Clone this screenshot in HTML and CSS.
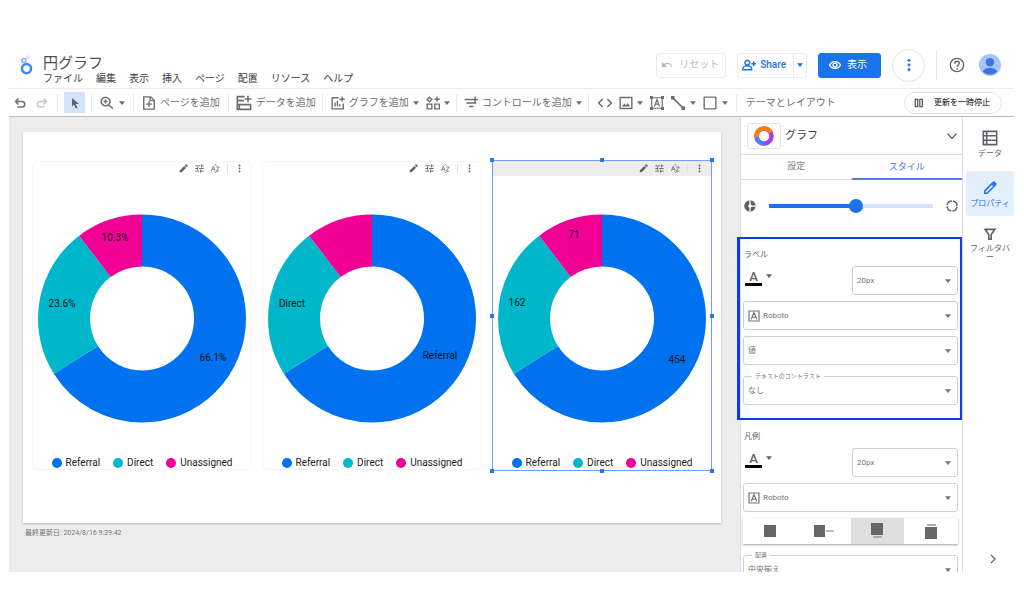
FILE: index.html
```html
<!DOCTYPE html>
<html lang="ja">
<head>
<meta charset="utf-8">
<title>円グラフ</title>
<link rel="stylesheet" href="styles.css">
</head>
<body>
<svg class="defs" aria-hidden="true">
  <symbol id="caret" viewBox="0 0 8 5"><path d="M0 0h8L4 5z"/></symbol>
  <symbol id="pencil" viewBox="0 0 24 24"><path d="M2 22v-5L14 5l5 5L7 22zM15.500 3.500l2-2a2 2 0 0 1 3 0l2 2a2 2 0 0 1 0 3l-2 2z"/></symbol>
  <symbol id="tune" viewBox="0 0 24 24"><path d="M1 5h12M17 5h6M17 1v8M1 12h6M11 12h12M7 8v8M1 19h10M15 19h8M15 15v8" fill="none" stroke="currentColor" stroke-width="2.500"/></symbol>
  <symbol id="sort" viewBox="0 0 24 24"><path d="M1 18L6 6l5 12M3 14h6M14 8h8l-8 11h8M9 4l3-3 3 3M9 20l3 3 3-3" fill="none" stroke="currentColor" stroke-width="2"/></symbol>
  <symbol id="dots" viewBox="0 0 24 24"><circle cx="12" cy="4" r="2.500"/><circle cx="12" cy="12" r="2.500"/><circle cx="12" cy="20" r="2.500"/></symbol>
  <symbol id="undo" viewBox="0 0 24 24"><path d="M9 3L3 9l6 6M3 9h13a5.500 5.500 0 0 1 0 11H7" fill="none" stroke="currentColor" stroke-width="3"/></symbol>
  <symbol id="boxa" viewBox="0 0 24 24"><path d="M2 2h20v20H2zM6.500 18.500L12 5l5.500 13.500M8.500 14.500h7" fill="none" stroke="currentColor" stroke-width="2.400"/></symbol>
</svg>

<header class="header">
  <svg class="logo" viewBox="0 0 14 22"><circle cx="7" cy="15" r="5" fill="none" stroke="#4285f4" stroke-width="2.800"/><circle cx="4" cy="6" r="2.300" fill="none" stroke="#7fabf8" stroke-width="1.600"/><circle cx="8.500" cy="2.500" r="1.500" fill="none" stroke="#bcd4fc"/></svg>
  <div class="heading">
    <h1 class="title">円グラフ</h1>
    <nav class="menu">
      <button>ファイル</button><button>編集</button><button>表示</button><button>挿入</button><button>ページ</button><button>配置</button><button>リソース</button><button>ヘルプ</button>
    </nav>
  </div>
  <div class="actions">
    <button class="btn reset" disabled><svg class="i12" viewBox="0 0 24 24"><path d="M2 6v10h10l-4-4c5-4 10-2 13 4l2-1C19 7 12 5 6 10z"/></svg>リセット</button>
    <div class="share">
      <button class="share-main"><svg class="i14" viewBox="0 0 24 24"><path d="M9 4a4 4 0 1 0 .1 0M1.500 20v-2c0-6 15-6 15 0v2zM20 6v8M16 10h8" fill="none" stroke="currentColor" stroke-width="2.500"/></svg>Share</button>
      <button class="share-more" aria-label="共有メニュー"><svg class="caret"><use href="#caret"/></svg></button>
    </div>
    <button class="btn view"><svg class="i12" viewBox="0 0 24 24"><path d="M1 12c5-9 17-9 22 0-5 9-17 9-22 0z" fill="none" stroke="currentColor" stroke-width="2.500"/><circle cx="12" cy="12" r="4" fill="none" stroke="currentColor" stroke-width="2.500"/></svg>表示</button>
    <button class="more" aria-label="その他"><svg class="i14"><use href="#dots"/></svg></button>
    <span class="rule"></span>
    <button class="plain help" aria-label="ヘルプ"><svg class="i16" viewBox="0 0 24 24"><circle cx="12" cy="12" r="10" fill="none" stroke="currentColor" stroke-width="2"/><path d="M8.500 10c0-5 7-4.500 7-.5 0 2.500-3.500 2.500-3.500 5.500" fill="none" stroke="currentColor" stroke-width="2"/><circle cx="12" cy="18" r="1.300"/></svg></button>
    <svg class="avatar" viewBox="0 0 24 24"><circle cx="12" cy="12" r="12" fill="#a4c5fb"/><circle cx="12" cy="9" r="4.600" fill="#3c73e0"/><path d="M4 19c2-5 14-5 16 0-4 4.500-12 4.500-16 0z" fill="#3c73e0"/></svg>
  </div>
</header>

<div class="toolbar">
  <div class="group history">
    <button class="tool" aria-label="元に戻す"><svg class="i12"><use href="#undo"/></svg></button>
    <button class="tool redo" aria-label="やり直し"><svg class="i12"><use href="#undo"/></svg></button>
  </div>
  <div class="group pick">
    <button class="tool active" aria-label="選択"><svg class="i12" viewBox="0 0 24 24"><path d="M6 2l14 12h-7l4 7-3.500 2L10 15l-4 4z"/></svg></button>
  </div>
  <div class="group roomy">
    <button class="tool zoom" aria-label="ズーム"><svg class="i14" viewBox="0 0 24 24"><path d="M9.500 2a7.500 7.500 0 1 0 .1 0M15 15l7 7M6 9.500h7M9.500 6v7" fill="none" stroke="currentColor" stroke-width="2.600"/></svg><svg class="caret"><use href="#caret"/></svg></button>
  </div>
  <div class="group roomy">
    <button class="tool"><svg class="i14" viewBox="0 0 24 24"><path d="M3 1.500h12l6 6v15H3zM12 9v10M7 14h10M14 2v6h6" fill="none" stroke="currentColor" stroke-width="2.400"/></svg>ページを追加</button>
  </div>
  <div class="group">
    <button class="tool"><svg class="i16" viewBox="0 0 24 24"><path d="M13 2.500H2v19h20v-7H2M2 8.500h10M5 14v7M18 1v10M13 6h10" fill="none" stroke="currentColor" stroke-width="2.400"/></svg>データを追加</button>
  </div>
  <div class="group charts">
    <button class="tool"><svg class="i14" viewBox="0 0 24 24"><path d="M13 3H2v19h19v-9M7 18v-7M11 18V8M15 18v-4M19 1v9M14.500 5.500h9" fill="none" stroke="currentColor" stroke-width="2.400"/></svg>グラフを追加<svg class="caret"><use href="#caret"/></svg></button>
    <button class="tool" aria-label="コミュニティ ビジュアリゼーション"><svg class="i14" viewBox="0 0 24 24"><path d="M2 14h8v8H2zM15 14h8v8h-8zM6 2l4 4-4 4-4-4zM19 1v9M14.500 5.500h9" fill="none" stroke="currentColor" stroke-width="2.400"/></svg><svg class="caret"><use href="#caret"/></svg></button>
  </div>
  <div class="group">
    <button class="tool"><svg class="i14" viewBox="0 0 24 24"><path d="M1 6h15M4 12h17M9 18h7M19 1v10M14 6h10" fill="none" stroke="currentColor" stroke-width="2.400"/></svg>コントロールを追加<svg class="caret"><use href="#caret"/></svg></button>
  </div>
  <div class="group insert">
    <button class="tool" aria-label="URL の埋め込み"><svg class="i14" viewBox="0 0 24 24"><path d="M8 5l-7 7 7 7M16 5l7 7-7 7" fill="none" stroke="currentColor" stroke-width="2.600"/></svg></button>
    <button class="tool image" aria-label="画像"><svg class="i14" viewBox="0 0 24 24"><path d="M2 2.500h20v19H2z" fill="none" stroke="currentColor" stroke-width="2.400"/><path d="M5 18l4-5 3 3 3-4 4 6z"/></svg><svg class="caret"><use href="#caret"/></svg></button>
    <button class="tool" aria-label="テキスト"><svg class="i14" viewBox="0 0 24 24"><path d="M3 3h18v18H3zM7.500 18L12 6l4.500 12M9 14h6" fill="none" stroke="currentColor" stroke-width="2"/><path d="M0 0h5v5H0zM19 0h5v5h-5zM0 19h5v5H0zM19 19h5v5h-5z"/></svg></button>
    <button class="tool line" aria-label="線"><svg class="i14" viewBox="0 0 24 24"><path d="M3 3l18 18" stroke="currentColor" stroke-width="3"/><path d="M0 0h6v6H0zM18 18h6v6h-6z"/></svg><svg class="caret"><use href="#caret"/></svg></button>
    <button class="tool shape" aria-label="図形"><svg class="i14" viewBox="0 0 24 24"><rect x="2" y="2" width="20" height="20" rx="1" fill="none" stroke="currentColor" stroke-width="2.400"/></svg><svg class="caret"><use href="#caret"/></svg></button>
  </div>
  <div class="group last">
    <button class="tool">テーマとレイアウト</button>
  </div>
  <button class="pause"><svg class="i10" viewBox="0 0 24 24"><path d="M3 3h6v18H3zM14 3h6v18h-6z" fill="none" stroke="currentColor" stroke-width="2.600"/></svg>更新を一時停止</button>
</div>

<div class="workspace">
  <main class="canvas">
    <div class="page">
      <article class="card">
        <div class="card-tools"><svg><use href="#pencil"/></svg><svg><use href="#tune"/></svg><svg><use href="#sort"/></svg><span></span><svg><use href="#dots"/></svg></div>
        <svg class="donut" viewBox="0 0 220 209">
          <g class="ring"><circle class="referral" cx="110" cy="104.500" r="78" pathLength="687" stroke-dasharray="454 687"/><circle class="direct" cx="110" cy="104.500" r="78" pathLength="687" stroke-dasharray="162 687" stroke-dashoffset="-454"/><circle class="unassigned" cx="110" cy="104.500" r="78" pathLength="687" stroke-dasharray="71 687" stroke-dashoffset="-616"/></g>
          <text x="83" y="27">10.3%</text><text x="30" y="93">23.6%</text><text x="181" y="147">66.1%</text>
        </svg>
        <ul class="legend"><li><i class="dot blue"></i>Referral</li><li><i class="dot teal"></i>Direct</li><li><i class="dot pink"></i>Unassigned</li></ul>
      </article>
      <article class="card">
        <div class="card-tools"><svg><use href="#pencil"/></svg><svg><use href="#tune"/></svg><svg><use href="#sort"/></svg><span></span><svg><use href="#dots"/></svg></div>
        <svg class="donut" viewBox="0 0 220 209">
          <g class="ring"><circle class="referral" cx="110" cy="104.500" r="78" pathLength="687" stroke-dasharray="454 687"/><circle class="direct" cx="110" cy="104.500" r="78" pathLength="687" stroke-dasharray="162 687" stroke-dashoffset="-454"/><circle class="unassigned" cx="110" cy="104.500" r="78" pathLength="687" stroke-dasharray="71 687" stroke-dashoffset="-616"/></g>
          <text x="30" y="93">Direct</text><text x="178" y="145">Referral</text>
        </svg>
        <ul class="legend"><li><i class="dot blue"></i>Referral</li><li><i class="dot teal"></i>Direct</li><li><i class="dot pink"></i>Unassigned</li></ul>
      </article>
      <article class="card selected">
        <div class="card-tools"><svg><use href="#pencil"/></svg><svg><use href="#tune"/></svg><svg><use href="#sort"/></svg><span></span><svg><use href="#dots"/></svg></div>
        <svg class="donut" viewBox="0 0 220 209">
          <g class="ring"><circle class="referral" cx="110" cy="104.500" r="78" pathLength="687" stroke-dasharray="454 687"/><circle class="direct" cx="110" cy="104.500" r="78" pathLength="687" stroke-dasharray="162 687" stroke-dashoffset="-454"/><circle class="unassigned" cx="110" cy="104.500" r="78" pathLength="687" stroke-dasharray="71 687" stroke-dashoffset="-616"/></g>
          <text x="82" y="24">71</text><text x="25" y="92">162</text><text x="185" y="149">454</text>
        </svg>
        <ul class="legend"><li><i class="dot blue"></i>Referral</li><li><i class="dot teal"></i>Direct</li><li><i class="dot pink"></i>Unassigned</li></ul>
        <div class="handles"><b></b><b></b><b></b><b></b><b class="empty"></b><b></b><b></b><b></b><b></b></div>
      </article>
    </div>
    <p class="updated">最終更新日: 2024/8/16 9:39:42</p>
  </main>

  <aside class="panel">
    <div class="panel-head">
      <span class="chart-type"><svg viewBox="0 0 24 24"><g fill="none" stroke-width="5.500"><circle cx="12" cy="12" r="9" stroke="#a142f4"/><circle cx="12" cy="12" r="9" pathLength="100" stroke="#4285f4" stroke-dasharray="22 100" stroke-dashoffset="-25"/><circle cx="12" cy="12" r="9" pathLength="100" stroke="#fa7b17" stroke-dasharray="46 100" stroke-dashoffset="-47"/></g></svg></span>
      <h2>グラフ</h2>
      <button class="plain" aria-label="グラフの種類を選択"><svg class="i10" viewBox="0 0 24 24"><path d="M1 6l11 12L23 6" fill="none" stroke="currentColor" stroke-width="3"/></svg></button>
    </div>
    <div class="tabs" role="tablist">
      <button role="tab" aria-selected="false">設定</button>
      <button role="tab" aria-selected="true">スタイル</button>
    </div>
    <div class="hole">
      <svg class="i12" viewBox="0 0 24 24"><circle cx="12" cy="12" r="7.500" fill="none" stroke="currentColor" stroke-width="8"/><path d="M12 0v24M12 12h12" stroke="#fff" stroke-width="2.500"/></svg>
      <input type="range" min="0" max="100" value="53" aria-label="ドーナツの穴の大きさ">
      <svg class="i12" viewBox="0 0 24 24"><circle cx="12" cy="12" r="10" fill="none" stroke="currentColor" stroke-width="3" pathLength="100" stroke-dasharray="21 4" stroke-dashoffset="-2"/></svg>
    </div>
    <section class="style-group marked">
      <h3>ラベル</h3>
      <div class="type-row">
        <button class="font-color" aria-label="ラベルの文字色"><span>A</span><svg class="caret"><use href="#caret"/></svg></button>
        <div class="field"><select aria-label="ラベルの文字サイズ"><option>20px</option></select><svg class="caret"><use href="#caret"/></svg></div>
      </div>
      <div class="field"><svg class="i12"><use href="#boxa"/></svg><select aria-label="ラベルのフォント"><option>Roboto</option></select><svg class="caret"><use href="#caret"/></svg></div>
      <div class="field"><select aria-label="ラベルの内容"><option>値</option></select><svg class="caret"><use href="#caret"/></svg></div>
      <div class="field titled"><label for="contrast">テキストのコントラスト</label><select id="contrast"><option>なし</option></select><svg class="caret"><use href="#caret"/></svg></div>
    </section>
    <section class="style-group">
      <h3>凡例</h3>
      <div class="type-row">
        <button class="font-color" aria-label="凡例の文字色"><span>A</span><svg class="caret"><use href="#caret"/></svg></button>
        <div class="field"><select aria-label="凡例の文字サイズ"><option>20px</option></select><svg class="caret"><use href="#caret"/></svg></div>
      </div>
      <div class="field"><svg class="i12"><use href="#boxa"/></svg><select aria-label="凡例のフォント"><option>Roboto</option></select><svg class="caret"><use href="#caret"/></svg></div>
      <div class="segments">
        <button aria-label="なし"><svg viewBox="0 0 20 16"><path d="M4 2h12v12H4z"/></svg></button>
        <button aria-label="右"><svg viewBox="0 0 20 16"><path d="M0 2h11v12H0z"/><path d="M12 7h8v2h-8z" fill="#bbb"/></svg></button>
        <button class="on" aria-label="下"><svg viewBox="0 0 20 16"><path d="M4 0h12v12H4z"/><path d="M6 13h9v2H6z" fill="#aaa"/></svg></button>
        <button aria-label="上"><svg viewBox="0 0 20 16"><path d="M4 4h12v12H4z"/><path d="M6 1h9v2H6z" fill="#aaa"/></svg></button>
      </div>
      <div class="field titled"><label for="align">配置</label><select id="align"><option>中央揃え</option></select><svg class="caret"><use href="#caret"/></svg></div>
    </section>
  </aside>

  <nav class="rail">
    <button><svg class="i16" viewBox="0 0 24 24"><path d="M2 2h20v20H2zM2 8.700h20M2 15.300h20M7 2v20" fill="none" stroke="currentColor" stroke-width="2.400"/></svg>データ</button>
    <button class="current"><svg class="i14" viewBox="0 0 24 24"><path d="M3 21v-4L15 5l4 4L7 21zM17 3l2-1 3 3-1 2z" fill="none" stroke="currentColor" stroke-width="2.600"/></svg>プロパティ</button>
    <button class="filter"><svg class="i14" viewBox="0 0 24 24"><path d="M3.500 4h17L14 13v8h-4v-8z" fill="none" stroke="currentColor" stroke-width="2.800"/></svg>フィルタバー</button>
    <button class="collapse" aria-label="パネルを閉じる"><svg class="i10" viewBox="0 0 24 24"><path d="M7 2l10 10L7 22" fill="none" stroke="currentColor" stroke-width="3"/></svg></button>
  </nav>
</div>
</body>
</html>
```
FILE: styles.css
```css
* { box-sizing: border-box; }

body {
  display: flex;
  flex-direction: column;
  height: 100vh;
  margin: 0;
  padding: 42px 10px 42px 9px;
  background: #fff;
  color: #5f6368;
  font: 10px/14px Roboto, "Noto Sans CJK JP", sans-serif;
}

h1, h2, h3, p, ul { margin: 0; padding: 0; font-weight: 400; }

button, select {
  padding: 0;
  border: 0;
  background: none;
  color: inherit;
  font: inherit;
}

svg { display: block; flex: none; fill: currentColor; }
.defs { position: absolute; width: 0; height: 0; }
.i10 { width: 10px; height: 10px; }
.i12 { width: 12px; height: 12px; }
.i14 { width: 14px; height: 14px; }
.i16 { width: 16px; height: 16px; }
.caret { width: 6px; height: 4px; }

/* Header */
.header {
  display: flex;
  flex: none;
  align-items: center;
  height: 47px;
  padding: 0 13px 0 11px;
  border-bottom: 1px solid #ececec;
}
.logo { width: 13px; height: 20px; margin-right: 10px; }
.heading { padding-top: 9px; }
.title { color: #4a4d51; font-size: 15px; line-height: 18px; }
.menu { display: flex; gap: 13px; color: #3c4043; }
.actions { display: flex; align-items: center; margin-left: auto; gap: 11px; }
.btn, .share {
  display: flex;
  align-items: center;
  height: 25px;
  border: 1px solid #ececec;
  border-radius: 3px;
}
.btn { gap: 6px; padding: 0 6px 0 4px; }
.reset { color: #b4b6b8; }
.share { color: #1a73e8; font-weight: 500; }
.share-main { display: flex; align-items: center; gap: 4px; padding: 0 7px 0 4px; }
.share-more { align-self: stretch; padding: 0 3px; border-left: 1px solid #ececec; }
.view { padding: 0 13px 0 10px; border-color: #1a73e8; background: #1a73e8; color: #fff; }
.more {
  display: grid;
  place-items: center;
  width: 33px;
  height: 33px;
  border: 1px solid #e4e4e4;
  border-radius: 50%;
  color: #1a73e8;
}
.rule { width: 1px; height: 30px; background: #e8e8e8; }
.help { margin: 0 3px 0 1px; }
.avatar { width: 22px; height: 22px; }

/* Toolbar */
.toolbar {
  display: flex;
  flex: none;
  align-items: center;
  height: 28px;
  padding-right: 12px;
  border-bottom: 1px solid #bdbdbd;
}
.group {
  display: flex;
  align-items: center;
  gap: 7px;
  height: 18px;
  padding: 0 6px 0 7px;
  border-right: 1px solid #ececec;
}
.roomy { padding: 0 8px; }
.tool { display: flex; align-items: center; gap: 4px; color: #6b6f73; white-space: nowrap; }
.history { gap: 10px; padding: 0 9px 0 5px; }
.redo { color: #c4c6c8; transform: scaleX(-1); }
.pick { padding: 0 6px; }
.active { justify-content: center; width: 21px; height: 21px; background: #d2e3fc; color: #5f6368; }
.zoom { gap: 5px; }
.charts { padding-left: 8px; }
.insert { gap: 7px; padding: 0 8px 0 9px; }
.line .caret, .shape .caret { margin-left: 1px; }
.last { border: 0; padding-left: 9px; }
.pause {
  display: flex;
  align-items: center;
  height: 22px;
  margin-left: auto;
  padding: 0 11px 0 9px;
  gap: 10px;
  border: 1px solid #e6e6e6;
  border-radius: 11px;
  color: #3c4043;
  font-size: 8px;
  font-weight: 500;
  white-space: nowrap;
}

/* Workspace */
.workspace {
  display: grid;
  flex: 1;
  grid-template-columns: minmax(0, 1fr) 223px 51px;
  grid-template-rows: minmax(0, 1fr);
  min-height: 0;
  overflow: hidden;
}
.canvas { padding: 15px 19px 0 14px; background: #ededed; }
.page {
  display: grid;
  grid-template-columns: repeat(3, minmax(0, 1fr));
  gap: 10px;
  padding: 29px 9px 53px;
  background: #fff;
  box-shadow: 0 1px 2px #b8b8b8;
}
.updated { padding: 3px 2px; color: #757575; font-size: 7px; }

.card {
  position: relative;
  display: flex;
  flex-direction: column;
  border-radius: 6px;
  box-shadow: inset 0 0 0 1px #f6f6f6;
}
.card-tools {
  display: flex;
  align-items: center;
  justify-content: flex-end;
  gap: 7px;
  height: 15px;
  padding-right: 8px;
  color: #5f6368;
}
.card-tools svg { width: 9px; height: 9px; }
.card-tools span { width: 1px; height: 9px; background: #e0e0e0; }
.donut { width: 100%; margin: 38px 0 32px; }
.donut text { fill: #111; font-size: 10px; text-anchor: middle; }
.ring { fill: none; stroke-width: 52px; transform: rotate(-90deg); transform-origin: 110px 104.5px; }
.referral { stroke: #0072f0; }
.direct { stroke: #00b6cb; }
.unassigned { stroke: #f10096; }
.legend {
  display: flex;
  justify-content: center;
  gap: 13px;
  height: 15px;
  color: #212121;
  list-style: none;
}
.legend li { display: flex; align-items: center; gap: 4px; }
.dot { width: 10px; height: 10px; border-radius: 50%; }
.blue { background: #0072f0; }
.teal { background: #00b6cb; }
.pink { background: #f10096; }

.selected { border-radius: 0; box-shadow: none; }
.selected .card-tools { background: #ededed; }
.selected::after {
  content: "";
  position: absolute;
  inset: -1px 0;
  border: 1px solid #6ba0f6;
}
.handles {
  position: absolute;
  z-index: 1;
  inset: -3px -2px;
  display: grid;
  grid-template-columns: repeat(3, 4px);
  align-content: space-between;
  justify-content: space-between;
}
.handles b { width: 4px; height: 4px; background: #2a75ea; }
.handles .empty { visibility: hidden; }

/* Properties panel */
.panel { position: relative; border: solid #dcdcdc; border-width: 0 1px; background: #fff; }
.panel-head {
  display: flex;
  align-items: center;
  height: 38px;
  padding: 0 5px 0 6px;
  gap: 4px;
  border-bottom: 1px solid #dcdcdc;
}
.panel-head h2 { flex: 1; color: #3c4043; font-size: 11px; }
.chart-type {
  display: grid;
  place-items: center;
  width: 34px;
  height: 26px;
  border: 1px solid #e8e8e8;
  border-radius: 2px;
}
.chart-type svg { width: 20px; height: 20px; }
.tabs { display: grid; grid-template-columns: 1fr 1fr; height: 25px; border-bottom: 1px solid #dcdcdc; }
.tabs button { padding-bottom: 2px; color: #80868b; font-size: 9px; }
.tabs [aria-selected="true"] { margin-bottom: -1px; padding-bottom: 0; border-bottom: 2px solid #4f7fe0; color: #3f74e0; }
.hole { display: flex; align-items: center; justify-content: space-between; height: 57px; padding: 0 4px 6px 3px; }
.hole input {
  flex: 1;
  height: 14px;
  margin: 0 13px;
  appearance: none;
  background: linear-gradient(90deg, #1a73e8 53%, #d2e3fc 53%) center / 100% 4px no-repeat;
}
.hole input::-webkit-slider-thumb { width: 14px; height: 14px; appearance: none; border-radius: 50%; background: #1a73e8; }

.style-group { display: grid; gap: 6px; padding: 11px 4px 0 2px; }
.marked { margin: 0 0 0 -4px; padding: 10px 2px 13px 3px; border: 3px solid #0b3bf2; border-width: 2px 2px 2px 3px; }
.style-group h3 { padding-left: 1px; margin-bottom: -1px; font-size: 8px; line-height: 12px; }
.type-row { display: flex; justify-content: space-between; align-items: flex-start; }
.type-row .field { width: 106px; }
.font-color { display: flex; gap: 4px; padding: 4px 0 0 2px; }
.font-color span { width: 17px; border-bottom: 3px solid #000; font-size: 13px; font-weight: 500; line-height: 13px; }
.font-color .caret { margin-top: 4px; }
.field {
  position: relative;
  display: flex;
  align-items: center;
  height: 29px;
  padding: 0 6px 0 4px;
  border: 1px solid #cfcfcf;
  border-radius: 3px;
  color: #757575;
  font-size: 8px;
}
.field select { flex: 1; appearance: none; }
.field > .i12 { margin-right: 3px; }
.field > .caret { pointer-events: none; }
.titled { margin-top: 5px; }
.titled label {
  position: absolute;
  top: -6px;
  left: 8px;
  padding: 0 3px;
  background: #fff;
  font-size: 6px;
  line-height: 10px;
}
.segments { display: grid; grid-template-columns: repeat(4, 1fr); height: 26px; box-shadow: 0 1px 2px #a0a0a0; }
.segments button { display: grid; place-items: center; color: #666; }
.segments svg { width: 20px; height: 16px; }
.segments .on { background: #dedede; }

/* Right rail */
.rail { display: flex; flex-direction: column; padding: 8px 0 6px 3px; }
.rail button {
  display: flex;
  flex: none;
  flex-direction: column;
  align-items: center;
  justify-content: flex-start;
  height: 45px;
  margin-bottom: 1px;
  padding: 5px 3px;
  gap: 3px;
  border-radius: 3px;
  font-size: 8px;
  line-height: 9px;
  word-break: break-all;
}
.rail .current { background: #e4effe; color: #1a73e8; padding-top: 10px; gap: 4px; }
.rail .filter { padding-top: 10px; }
.rail .collapse { height: 12px; margin: auto 0 0 6px; padding: 0; }
```
